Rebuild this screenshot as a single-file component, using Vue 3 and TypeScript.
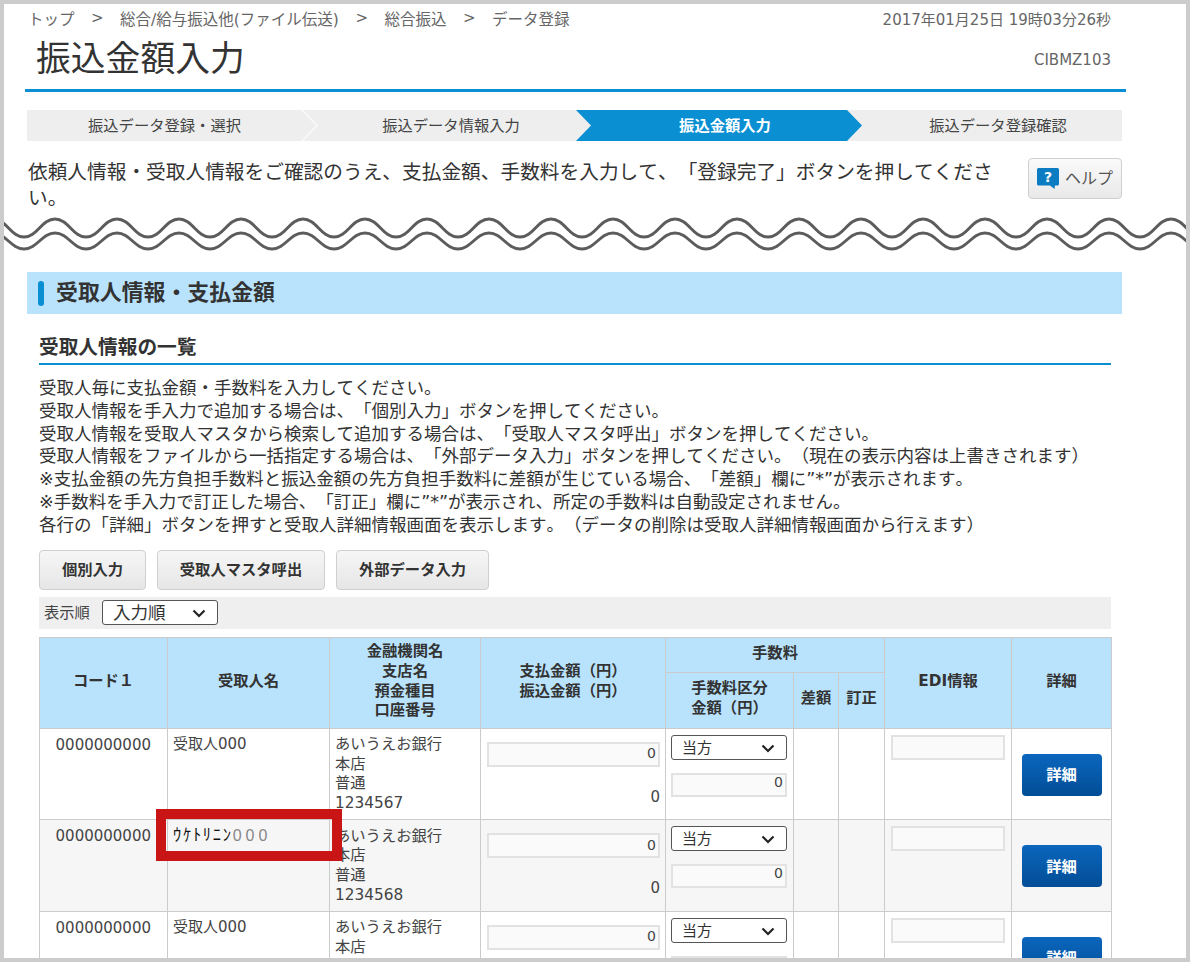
<script setup lang="ts">
interface Row {
  name: string
  kana: boolean
  account: string
}

const crumbs: string[] = ['トップ', '総合/給与振込他(ファイル伝送)', '総合振込', 'データ登録']

const guide: string[] = [
  '受取人毎に支払金額・手数料を入力してください。',
  '受取人情報を手入力で追加する場合は、「個別入力」ボタンを押してください。',
  '受取人情報を受取人マスタから検索して追加する場合は、「受取人マスタ呼出」ボタンを押してください。',
  '受取人情報をファイルから一括指定する場合は、「外部データ入力」ボタンを押してください。（現在の表示内容は上書きされます）',
  '※支払金額の先方負担手数料と振込金額の先方負担手数料に差額が生じている場合、「差額」欄に”*”が表示されます。',
  '※手数料を手入力で訂正した場合、「訂正」欄に”*”が表示され、所定の手数料は自動設定されません。',
  '各行の「詳細」ボタンを押すと受取人詳細情報画面を表示します。（データの削除は受取人詳細情報画面から行えます）',
]

const actions: string[] = ['個別入力', '受取人マスタ呼出', '外部データ入力']

const rows: Row[] = [
  { name: '受取人000', kana: false, account: '1234567' },
  { name: 'ｳｹﾄﾘﾆﾝ', kana: true, account: '1234568' },
  { name: '受取人000', kana: false, account: '1234569' },
]

function wave(offsetY: number, amp: number): string {
  const half = 31
  let x = -42
  let up = true
  let d = `M${x} ${offsetY + amp}`
  while (x < 1200) {
    const next = x + half
    const from = up ? offsetY + amp : offsetY
    const to = up ? offsetY : offsetY + amp
    d += ` C${x + half * 0.42} ${from} ${next - half * 0.42} ${to} ${next} ${to}`
    x = next
    up = !up
  }
  return d
}

const waveA = wave(5, 18)
const waveB = wave(19, 16)
</script>

<template>
  <div class="frame">
    <header class="top">
      <div class="crumb-row">
        <nav class="crumbs">
          <template v-for="(c, i) in crumbs" :key="c">
            <span v-if="i > 0" class="sep">&gt;</span>
            <span>{{ c }}</span>
          </template>
        </nav>
        <span class="stamp">2017年01月25日 19時03分26秒</span>
      </div>
      <div class="title-row">
        <h1>振込金額入力</h1>
        <span class="screen-id">CIBMZ103</span>
      </div>
    </header>

    <ol class="steps">
      <li class="step first">
        振込データ登録・選択
        <svg class="chev" width="18" height="31" viewBox="0 0 18 31">
          <path d="M1 0 L16 15.5 L1 31" fill="none" stroke="#fafafa" stroke-width="1.5" />
        </svg>
      </li>
      <li class="step second">振込データ情報入力</li>
      <li class="step current">振込金額入力</li>
      <li class="step last">振込データ登録確認</li>
    </ol>

    <div class="desc-row">
      <p class="desc">依頼人情報・受取人情報をご確認のうえ、支払金額、手数料を入力して、「登録完了」ボタンを押してください。</p>
      <button class="help" type="button">
        <svg width="22" height="21" viewBox="0 0 22 21">
          <path d="M1.5 0 H20.5 A1.5 1.5 0 0 1 22 1.5 V16 A1.5 1.5 0 0 1 20.5 17.5 H18 L17.5 21 L13 17.5 H1.5 A1.5 1.5 0 0 1 0 16 V1.5 A1.5 1.5 0 0 1 1.5 0 Z" fill="#0b7cc1" />
          <text x="11" y="14" text-anchor="middle" class="qmark">?</text>
        </svg>
        <span class="help-label">ヘルプ</span>
      </button>
    </div>

    <svg class="waves" width="1182" height="40" viewBox="0 0 1182 40" aria-hidden="true">
      <path :d="waveA" />
      <path :d="waveB" />
    </svg>

    <h2 class="section"><i class="bar"></i><span class="section-label">受取人情報・支払金額</span></h2>

    <h3 class="sub">受取人情報の一覧</h3>

    <div class="guide">
      <p v-for="line in guide" :key="line">{{ line }}</p>
    </div>

    <div class="actions">
      <button v-for="a in actions" :key="a" type="button" class="act">{{ a }}</button>
    </div>

    <div class="sort-bar">
      <span class="sort-label">表示順</span>
      <div class="sel sort-sel">
        <select><option>入力順</option></select>
        <svg width="14" height="9" viewBox="0 0 14 9"><path d="M1.5 1.5 L7 7 L12.5 1.5" fill="none" stroke="#222" stroke-width="2.2" /></svg>
      </div>
    </div>

    <div class="table-wrap">
      <table>
        <colgroup>
          <col class="c1" /><col class="c2" /><col class="c3" /><col class="c4" /><col class="c5" />
          <col class="c6" /><col class="c7" /><col class="c8" /><col class="c9" />
        </colgroup>
        <thead>
          <tr class="h1">
            <th rowspan="2">コード１</th>
            <th rowspan="2">受取人名</th>
            <th rowspan="2">金融機関名<br />支店名<br />預金種目<br />口座番号</th>
            <th rowspan="2">支払金額（円）<br />振込金額（円）</th>
            <th colspan="3">手数料</th>
            <th rowspan="2">EDI情報</th>
            <th rowspan="2">詳細</th>
          </tr>
          <tr class="h2">
            <th>手数料区分<br />金額（円）</th>
            <th>差額</th>
            <th>訂正</th>
          </tr>
        </thead>
        <tbody>
          <tr v-for="r in rows" :key="r.account">
            <td class="code">0000000000</td>
            <td class="name">
              <template v-if="r.kana"><span class="kana">{{ r.name }}</span><span class="kana-num">000</span></template>
              <template v-else>{{ r.name }}</template>
            </td>
            <td class="bank">あいうえお銀行<br />本店<br />普通<br />{{ r.account }}</td>
            <td class="amount">
              <input class="field" value="0" />
              <div class="net">0</div>
            </td>
            <td class="fee">
              <div class="sel fee-sel">
                <select><option>当方</option></select>
                <svg width="14" height="9" viewBox="0 0 14 9"><path d="M1.5 1.5 L7 7 L12.5 1.5" fill="none" stroke="#222" stroke-width="2.2" /></svg>
              </div>
              <input class="field fee-input" value="0" />
            </td>
            <td></td>
            <td></td>
            <td class="edi"><input class="field" /></td>
            <td class="detail"><button type="button">詳細</button></td>
          </tr>
        </tbody>
      </table>
      <div class="marker"></div>
    </div>
  </div>
</template>

<style>
html, body { margin: 0; background: #fff; }
</style>

<style scoped>
.frame {
  box-sizing: border-box;
  width: 1190px;
  height: 962px;
  overflow: hidden;
  border: 4px solid #cccccc;
  background: #fff;
  color: #333;
  font-family: "DejaVu Sans", "Noto Sans CJK JP", sans-serif;
  font-size: 15px;
  text-spacing-trim: space-all;
  font-kerning: none;
}
p, h1, h2, h3, ol { margin: 0; padding: 0; }

.top { margin-left: 21px; width: 1101px; border-bottom: 3px solid #0a8fd3; }
.crumb-row { height: 28px; display: flex; align-items: center; justify-content: space-between; padding: 0 15px 0 3px; color: #666; }
.crumbs { display: flex; align-items: center; font-size: 15.5px; }
.sep { margin: 0 16.5px; font-size: 15px; color: #666; }
.stamp { white-space: nowrap; }
.title-row { height: 57px; display: flex; justify-content: space-between; padding: 0 15px 0 11px; }
h1 { font-size: 34.8px; font-weight: 400; line-height: 48px; color: #333; font-family: "Noto Sans CJK JP", sans-serif; }
.screen-id { font-size: 15px; line-height: 20px; margin-top: 18px; color: #666; }

.steps { list-style: none; display: flex; margin: 18px 0 0 23px; width: 1095px; height: 31px; background: #eeeeee; font-size: 15.3px; }
.step { position: relative; display: flex; align-items: center; justify-content: center; box-sizing: border-box; color: #444; padding-bottom: 3px; }
.first { width: 275px; }
.chev { position: absolute; left: 274px; top: 0; }
.second { width: 274px; padding-left: 24px; }
.current {
  width: 286px;
  padding-left: 12px;
  background: #0a8fd3;
  color: #fff;
  font-weight: 700;
  clip-path: polygon(0 0, 271px 0, 100% 50%, 271px 100%, 0 100%, 15px 50%);
}
.last { width: 260px; padding-left: 12px; }

.desc-row { display: flex; height: 73px; margin-left: 24px; width: 1094px; padding-top: 17px; box-sizing: border-box; justify-content: space-between; }
.desc { width: 975px; font-size: 19.7px; line-height: 26px; font-family: "Noto Sans CJK JP", sans-serif; color: #333; }
.help {
  box-sizing: border-box;
  width: 94px;
  height: 41px;
  display: flex;
  align-items: center;
  justify-content: center;
  gap: 6px;
  padding: 0;
  border: 1px solid #cfcfcf;
  border-radius: 4px;
  background: linear-gradient(#fafafa, #e9e9e9);
  color: #555;
  font: 400 16px "Noto Sans CJK JP", sans-serif;
}
.help-label { margin-bottom: 3px; }
.qmark { fill: #fff; font: 700 14px "DejaVu Sans", sans-serif; }

.waves { display: block; }
.waves path { fill: none; stroke: #5c5c5c; stroke-width: 3px; filter: blur(0.7px); }

.section {
  display: flex;
  align-items: center;
  margin: 18px 0 0 23px;
  width: 1095px;
  height: 42px;
  background: #b9e3fd;
  font-size: 21.9px;
  font-weight: 700;
  color: #333;
  font-family: "Noto Sans CJK JP", sans-serif;
}
.section-label { margin-bottom: 5px; line-height: 30px; }
.bar { width: 6px; height: 25px; margin: 0 12px 0 11px; border-radius: 3px; background: #0a8fd3; }

.sub {
  box-sizing: border-box;
  margin-left: 35px;
  width: 1072px;
  height: 51px;
  padding-top: 18px;
  border-bottom: 2px solid #0a8fd3;
  font-size: 19.7px;
  line-height: 28px;
  font-weight: 700;
  color: #333;
  font-family: "Noto Sans CJK JP", sans-serif;
}

.guide { margin: 12px 0 0 35px; font-size: 17.5px; line-height: 22.8px; color: #333; white-space: nowrap; }

.actions { display: flex; gap: 11px; margin: 13px 0 0 35px; }
.act {
  height: 40px;
  box-sizing: border-box;
  padding: 0 0 3px;
  border: 1px solid #cfcfcf;
  border-radius: 4px;
  background: linear-gradient(#f6f6f6, #e6e6e6);
  color: #333;
  font: 700 15.3px "Noto Sans CJK JP", sans-serif;
}
.act:nth-child(1) { width: 107px; }
.act:nth-child(2) { width: 168px; }
.act:nth-child(3) { width: 153px; }

.sort-bar { display: flex; align-items: center; gap: 12px; margin: 7px 0 0 35px; width: 1072px; height: 32px; padding-left: 5px; box-sizing: border-box; background: #efefef; color: #444; font-size: 15.3px; }
.sort-label { margin-bottom: 3px; }
.sel { position: relative; box-sizing: border-box; height: 25px; border: 1px solid #555; border-radius: 3px; background: #fff; }
.sel select {
  appearance: none;
  display: block;
  width: 100%;
  height: 100%;
  border: 0;
  outline: 0;
  background: transparent;
  color: #333;
  font-family: "Noto Sans CJK JP", sans-serif;
  padding: 0 0 3px 10px;
}
.sel svg { position: absolute; right: 11px; top: 8px; pointer-events: none; }
.sort-sel { width: 116px; }
.sort-sel select { font-size: 17.6px; padding: 0 0 2px 10px; line-height: 20px; }
.fee-sel { width: 100%; }
.fee-sel select { font-size: 15px; }

.table-wrap { position: relative; margin: 8px 0 0 35px; width: 1073px; }
table { table-layout: fixed; width: 1072px; border-collapse: collapse; line-height: 19.7px; font-size: 15px; }
.c1 { width: 128px; } .c2 { width: 162px; } .c3 { width: 151px; } .c4 { width: 185px; }
.c5 { width: 128px; } .c6 { width: 45px; } .c7 { width: 46px; } .c8 { width: 127px; } .c9 { width: 100px; }
th, td { border: 1px solid #cbcbcb; padding: 0; }
th { background: #b9e3fd; font-weight: 700; color: #333; text-align: center; vertical-align: middle; font-family: "DejaVu Sans", "Noto Sans CJK JP", sans-serif; font-size: 15.3px; padding-bottom: 2px; }
.h1 { height: 35px; }
.h2 { height: 56px; }
tbody tr { height: 91.5px; }
tbody tr:nth-child(even) td { background: #f6f6f6; }
td { vertical-align: top; color: #444; }
.code { text-align: right; padding: 7px 16px 0 0; }
.name { padding: 6px 0 0 5px; }
.kana { color: #111; font-size: 16.5px; letter-spacing: 1.7px; }
.kana-num { color: #888; letter-spacing: 4px; font-weight: 300; font-family: "Liberation Sans", sans-serif; font-size: 16px; }
.bank { padding: 6.5px 0 0 5px; font-size: 15.3px; }
.amount { padding: 13px 5px 0 6px; text-align: right; }
.field {
  display: block;
  box-sizing: border-box;
  width: 100%;
  height: 25px;
  border: 2px solid #e2e2e2;
  background: #fafafa;
  padding: 0 2px 2px;
  text-align: right;
  color: #444;
  font-size: 14px;
  font-family: "DejaVu Sans", sans-serif;
  outline: 0;
}
.net { margin-top: 21px; }
.fee { padding: 6px 6px 0 5px; }
.fee-input { margin-top: 13px; height: 24px; padding-bottom: 6px; }
.edi { padding: 6px 6px 0 6px; }
.detail { text-align: center; padding-top: 25px; }
.detail button {
  width: 80px;
  height: 42px;
  border: 0;
  border-radius: 4px;
  padding: 0 0 3px;
  background: linear-gradient(#0b66bd, #024d96);
  color: #fff;
  font: 700 15.3px "Noto Sans CJK JP", sans-serif;
}

.marker { position: absolute; left: 117px; top: 172px; width: 186px; height: 52px; box-sizing: border-box; border: 10px solid #c91515; pointer-events: none; }
</style>
